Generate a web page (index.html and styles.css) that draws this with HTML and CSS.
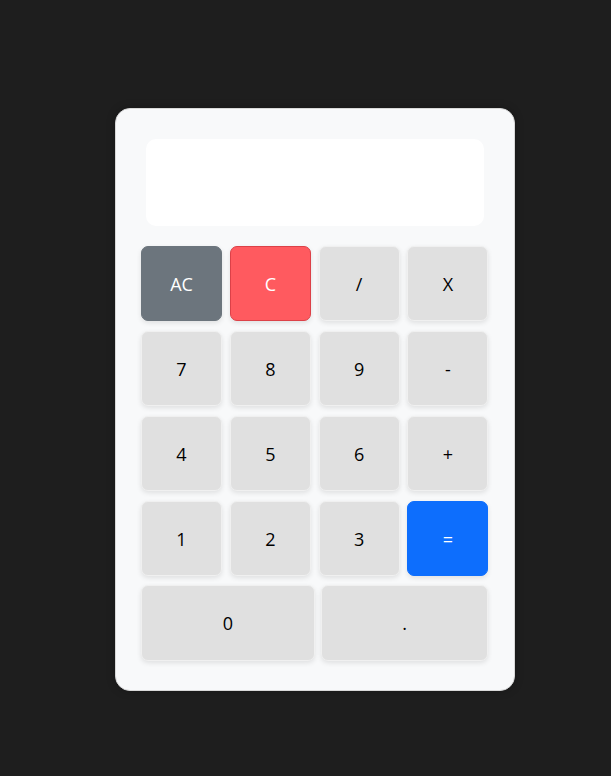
FILE: index.html
```html
<!DOCTYPE html>
<html>
<head>
<meta charset="utf-8">
<link rel="stylesheet" href="styles.css">
</head>
<body>
<div class="calculator">
  <div class="display"></div>
  <div class="keys">
    <button class="key key-gray">AC</button>
    <button class="key key-red">C</button>
    <button class="key">/</button>
    <button class="key">X</button>
    <button class="key">7</button>
    <button class="key">8</button>
    <button class="key">9</button>
    <button class="key">-</button>
    <button class="key">4</button>
    <button class="key">5</button>
    <button class="key">6</button>
    <button class="key">+</button>
    <button class="key">1</button>
    <button class="key">2</button>
    <button class="key">3</button>
    <button class="key key-blue">=</button>
  </div>
  <div class="last-row">
    <button class="key key-zero">0</button>
    <button class="key key-dot">.</button>
  </div>
</div>
</body>
</html>
```
FILE: styles.css
```css
html, body {
  margin: 0;
  padding: 0;
  background: #1e1e1e;
  height: 100%;
}
body {
  padding: 108px 0 0 115px;
  box-sizing: border-box;
  font-family: "Open Sans", "Noto Sans", sans-serif;
}
.calculator {
  width: 400px;
  height: 583px;
  box-sizing: border-box;
  background: #f8f9fa;
  border: 1px solid #d8d8d8;
  border-radius: 15px;
  padding: 30px 25px 0 25px;
  box-shadow: 0 0 8px rgba(0,0,0,0.25);
}
.display {
  height: 87px;
  margin: 0 5px 20px 5px;
  background: #ffffff;
  border-radius: 10px;
}
.keys {
  display: grid;
  grid-template-columns: repeat(4, 81px);
  column-gap: 7.83px;
  row-gap: 10px;
  width: 348px;
}
.key {
  height: 75px;
  box-sizing: border-box;
  border: 1px solid #f0f0f0;
  border-radius: 7px;
  background: #e0e0e0;
  color: #000;
  font-family: "Open Sans", "Noto Sans", sans-serif;
  font-size: 18px;
  padding: 0;
  box-shadow: 0 2px 5px rgba(0,0,0,0.1);
}
.key-gray {
  background: #6c757d;
  border-color: #6c757d;
  color: #fff;
}
.key-red {
  background: #ff5a5f;
  border-color: #dc4148;
  color: #fff;
}
.key-blue {
  background: #0d6efd;
  border-color: #0d6efd;
  color: #fff;
}
.last-row {
  display: flex;
  gap: 6px;
  margin-top: 9px;
  width: 348px;
}
.key-zero {
  width: 174px;
  height: 76px;
}
.key-dot {
  width: 167px;
  height: 76px;
}
```
